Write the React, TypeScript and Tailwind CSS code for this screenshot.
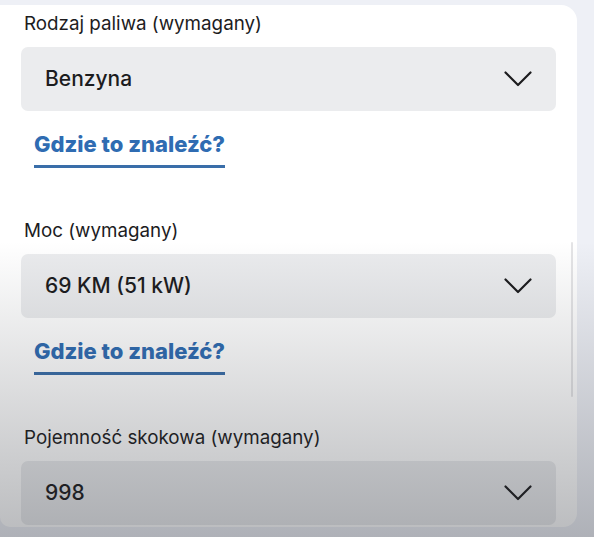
import React from 'react';

type Field = { label: string; value: string; help: boolean };

const fields: Field[] = [
  { label: 'Rodzaj paliwa (wymagany)', value: 'Benzyna', help: true },
  { label: 'Moc (wymagany)', value: '69 KM (51 kW)', help: true },
  { label: 'Pojemność skokowa (wymagany)', value: '998', help: false },
];

function Chevron() {
  return (
    <svg width="28" height="16" viewBox="0 0 28 16" fill="none" className="text-[#1c1c1e]">
      <path d="M1.5 1.5L14 14L26.5 1.5" stroke="currentColor" strokeWidth="2.2" strokeLinecap="round" strokeLinejoin="round" />
    </svg>
  );
}

function SelectField({ field }: { field: Field }) {
  return (
    <div className="flex flex-col">
      <label className="ml-[3px] text-[18.8px] leading-[26px] text-[#1c1c1e]">{field.label}</label>
      <button className="mt-[10px] flex h-[64px] w-full items-center justify-between rounded-[7px] bg-[#ebecee] pl-[24px] pr-[24px] text-left">
        <span className="text-[21px] font-medium leading-[28px] text-[#1c1c1e]">{field.value}</span>
        <Chevron />
      </button>
      {field.help && (
        <div className="mt-[18px] ml-[13px]">
          <a className="inline-block border-b-[3px] border-[#3a6ea9] pb-[6px] text-[22px] font-extrabold leading-[30px] text-[#2f6cb2]">
            Gdzie to znaleźć?
          </a>
        </div>
      )}
    </div>
  );
}

export default function App() {
  return (
    <div
      className="relative h-[537px] w-[594px] overflow-hidden bg-[#eef0f6]"
      style={{ fontFamily: 'Inter, "Noto Sans", sans-serif' }}
    >
      <div className="relative mt-[5px] h-[522px] w-[577px] rounded-tr-[16px] rounded-br-[14px] rounded-bl-[10px] bg-white">
        <div className="flex flex-col gap-[50px] pl-[21px] pr-[21px] pt-[6px]">
          {fields.map((f) => (
            <SelectField key={f.label} field={f} />
          ))}
        </div>
        <div className="absolute right-[4px] top-[237px] h-[155px] w-[2px] rounded-full bg-[#e4e4e6]" />
      </div>
      <div className="pointer-events-none absolute inset-0 bg-gradient-to-b from-transparent from-[45%] to-[rgba(40,44,52,0.32)]" />
    </div>
  );
}
